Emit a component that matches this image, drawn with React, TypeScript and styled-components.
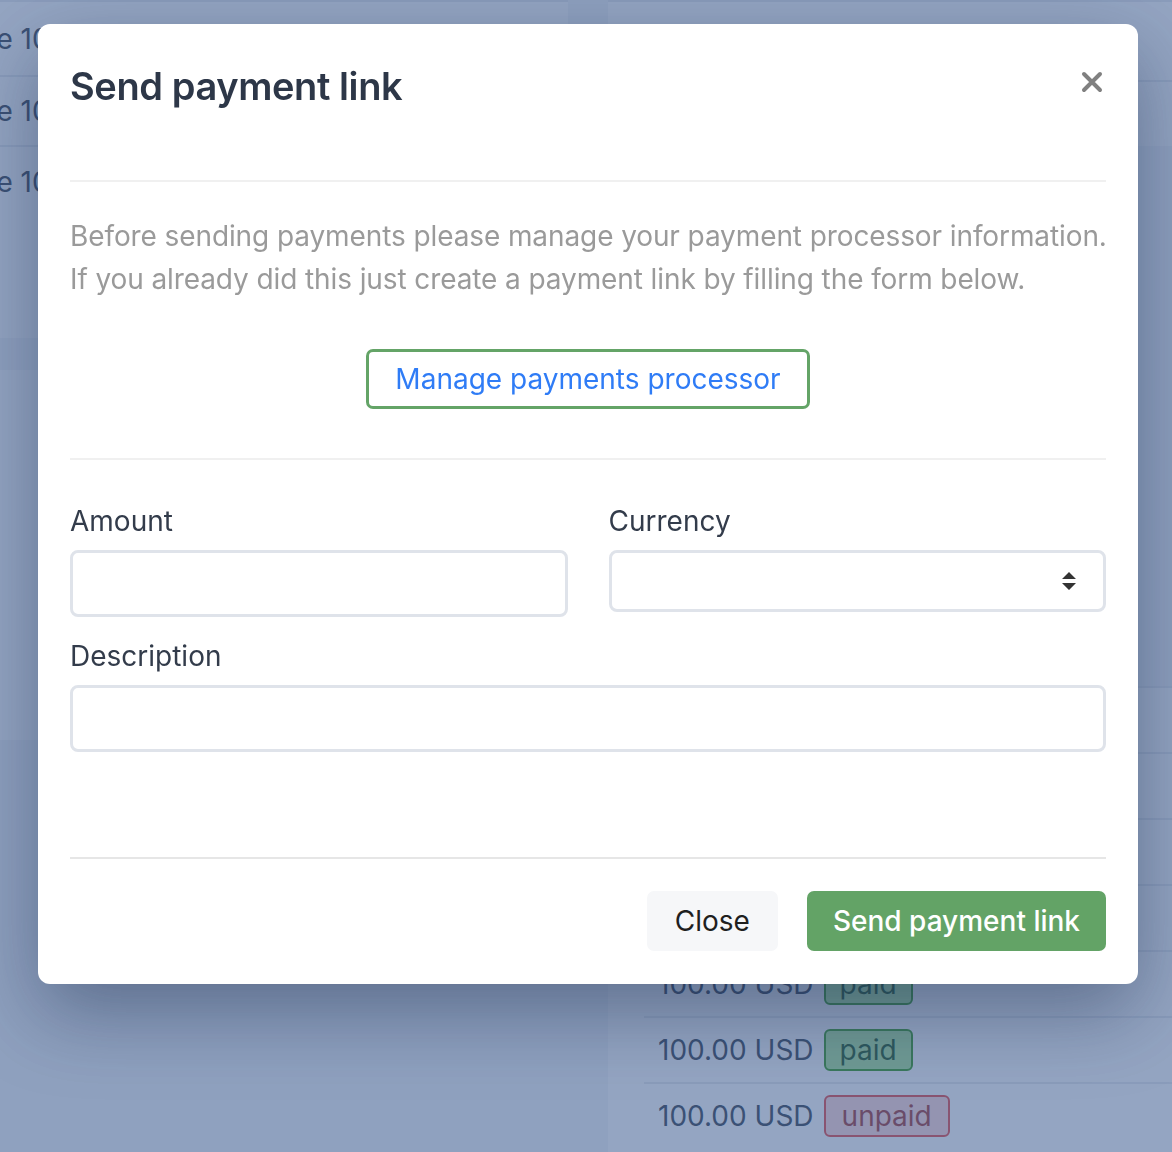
import React from 'react';
import styled, { createGlobalStyle, css } from 'styled-components';

const GlobalStyle = createGlobalStyle`
  html, body {
    margin: 0;
    padding: 0;
    height: 1152px;
    overflow: hidden;
    background: #f3f5f8;
    font-family: Inter, "Noto Sans", "Liberation Sans", sans-serif;
  }
`;

/* ---------- page behind the modal ---------- */

const Page = styled.div`
  display: flex;
  gap: 40px;
  margin-left: -82px;
  height: 1152px;
  overflow: hidden;
  color: #2d3748;
  font-size: 28px;
`;

const LeftColumn = styled.div`
  width: 650px;
  display: flex;
  flex-direction: column;
  gap: 32px;
`;

const RightColumn = styled.div`
  flex: 1;
  display: flex;
  flex-direction: column;
  gap: 40px;
`;

const Card = styled.div<{ $height?: number }>`
  background: #ffffff;
  ${({ $height }) => $height && css`height: ${$height}px;`}
`;

const ListRow = styled.div<{ $h: number }>`
  height: ${({ $h }) => $h}px;
  display: flex;
  align-items: center;
  padding: 0 40px 0 0;
  border-top: 2px solid #e6e9ee;
  box-sizing: border-box;
`;

const RowLabel = styled.span`
  flex: 1;
`;

const Avatar = styled.span`
  width: 26px;
  height: 26px;
  border-radius: 50%;
  background: #2d3748;
  margin-right: 38px;
`;

const PaymentsList = styled.div`
  background: #ffffff;
  margin-top: 500px;
  padding-left: 36px;
  flex: 1;
`;

const PaymentRow = styled.div`
  height: 66px;
  display: flex;
  align-items: center;
  gap: 10px;
  padding-left: 14px;
  border-top: 2px solid #e6e9ee;
  box-sizing: border-box;
`;

const Badge = styled.span<{ $kind: 'paid' | 'unpaid' }>`
  display: inline-flex;
  align-items: center;
  height: 42px;
  padding: 0 14px;
  border-radius: 6px;
  border: 2px solid #2a9410;
  background: #a8e592;
  color: #0e4c10;
  box-sizing: border-box;

  ${({ $kind }) => $kind === 'unpaid' && css`
    border-color: #e53e3e;
    background: #fed7d7;
    color: #9b2c2c;
    padding: 0 16px;
  `}
`;

/* ---------- modal ---------- */

const Overlay = styled.div`
  position: fixed;
  inset: 0;
  background: rgba(70, 100, 150, 0.58);
  padding: 24px 0 0 38px;
  box-sizing: border-box;
`;

const Modal = styled.div`
  width: 1100px;
  height: 960px;
  background: #ffffff;
  border-radius: 12px;
  padding: 0 32px;
  box-sizing: border-box;
  display: flex;
  flex-direction: column;
  box-shadow: 0 28px 80px rgba(20, 35, 70, 0.42);
`;

const Header = styled.div`
  display: flex;
  justify-content: space-between;
  align-items: flex-start;
  padding: 40px 0 72px;
  border-bottom: 2px solid #f0f0f0;
`;

const Title = styled.h2`
  margin: 0;
  font-size: 38px;
  line-height: 44px;
  font-weight: 600;
  color: #2d3748;
  letter-spacing: -0.4px;
`;

const CloseIcon = styled.button`
  display: flex;
  border: none;
  background: transparent;
  padding: 0;
  margin: 7px 3px 0 0;
  cursor: pointer;
`;

const Body = styled.div`
  padding-top: 33px;
`;

const Intro = styled.p`
  margin: 0;
  font-size: 28px;
  line-height: 43px;
  color: #9a9a9a;
  font-weight: 400;
  letter-spacing: -0.1px;
  white-space: nowrap;
`;

const ProcessorWrap = styled.div`
  display: flex;
  justify-content: center;
  padding: 48px 0 49px;
  border-bottom: 2px solid #f0f0f0;
`;

const OutlineButton = styled.button`
  height: 60px;
  padding: 0 26px;
  border: 3px solid #64a467;
  border-radius: 7px;
  background: #ffffff;
  color: #2f7cf6;
  font-family: inherit;
  font-size: 28px;
  cursor: pointer;
`;

const Form = styled.div`
  padding-top: 43px;
  display: grid;
  grid-template-columns: 1fr 1fr;
  column-gap: 41px;
  row-gap: 21px;
  padding-bottom: 105px;
  border-bottom: 2px solid #e6e6e6;
`;

const Field = styled.div<{ $wide?: boolean }>`
  display: flex;
  flex-direction: column;
  gap: 11px;
  ${({ $wide }) => $wide && css`grid-column: 1 / -1;`}
`;

const LabelText = styled.label`
  font-size: 28px;
  line-height: 36px;
  color: #333c4b;
`;

const Input = styled.input`
  height: 67px;
  border: 3px solid #dfe3ea;
  border-radius: 8px;
  box-sizing: border-box;
  font-family: inherit;
  font-size: 28px;
  padding: 0 16px;
  outline: none;
`;

const SelectBox = styled.div`
  height: 62px;
  border: 3px solid #dfe3ea;
  border-radius: 8px;
  box-sizing: border-box;
  display: flex;
  align-items: center;
  justify-content: flex-end;
  padding-right: 26px;
`;

const Footer = styled.div`
  display: flex;
  justify-content: flex-end;
  gap: 29px;
  padding-top: 32px;
`;

const FooterButton = styled.button<{ $primary?: boolean }>`
  height: 60px;
  border: none;
  border-radius: 7px;
  padding: 0 28px;
  font-family: inherit;
  font-size: 28px;
  background: #f6f7f9;
  color: #1f1f1f;
  cursor: pointer;

  ${({ $primary }) => $primary && css`
    padding: 0 26px;
    background: #63a366;
    color: #ffffff;
    font-weight: 500;
  `}
`;

const payments: Array<'paid' | 'unpaid'> = ['paid', 'paid', 'paid', 'paid', 'paid', 'paid', 'unpaid'];

export default function App() {
  return (
    <>
      <GlobalStyle />
      <Page>
        <LeftColumn>
          <Card $height={338}>
            <ListRow $h={75}>
              <RowLabel>Invoice 1001</RowLabel>
              <Avatar />
              <svg width="14" height="22" viewBox="0 0 14 22" fill="none" stroke="#2d3748" strokeWidth="2.5">
                <rect x="2" y="2" width="10" height="18" rx="5" />
              </svg>
            </ListRow>
            <ListRow $h={70}>
              <RowLabel>Invoice 1002</RowLabel>
            </ListRow>
            <ListRow $h={72}>
              <RowLabel>Invoice 1003</RowLabel>
            </ListRow>
          </Card>
          <Card $height={370} />
        </LeftColumn>
        <RightColumn>
          <Card $height={146}>
            <ListRow $h={80} />
            <ListRow $h={66} />
          </Card>
          <PaymentsList>
            {payments.map((p, i) => (
              <PaymentRow key={i}>
                100.00 USD <Badge $kind={p}>{p}</Badge>
              </PaymentRow>
            ))}
          </PaymentsList>
        </RightColumn>
      </Page>

      <Overlay>
        <Modal>
          <Header>
            <Title>Send payment link</Title>
            <CloseIcon aria-label="Close">
              <svg width="22" height="22" viewBox="0 0 22 22">
                <path d="M3 3 L19 19 M19 3 L3 19" stroke="#808080" strokeWidth="4" strokeLinecap="round" />
              </svg>
            </CloseIcon>
          </Header>
          <Body>
            <Intro>
              Before sending payments please manage your payment processor information.
              <br />
              If you already did this just create a payment link by filling the form below.
            </Intro>
            <ProcessorWrap>
              <OutlineButton>Manage payments processor</OutlineButton>
            </ProcessorWrap>
            <Form>
              <Field>
                <LabelText>Amount</LabelText>
                <Input />
              </Field>
              <Field>
                <LabelText>Currency</LabelText>
                <SelectBox>
                  <svg width="16" height="20" viewBox="0 0 16 20">
                    <path d="M8 1 L15 8 H1 Z M1 12 H15 L8 19 Z" fill="#333333" />
                  </svg>
                </SelectBox>
              </Field>
              <Field $wide>
                <LabelText>Description</LabelText>
                <Input />
              </Field>
            </Form>
            <Footer>
              <FooterButton>Close</FooterButton>
              <FooterButton $primary>Send payment link</FooterButton>
            </Footer>
          </Body>
        </Modal>
      </Overlay>
    </>
  );
}
